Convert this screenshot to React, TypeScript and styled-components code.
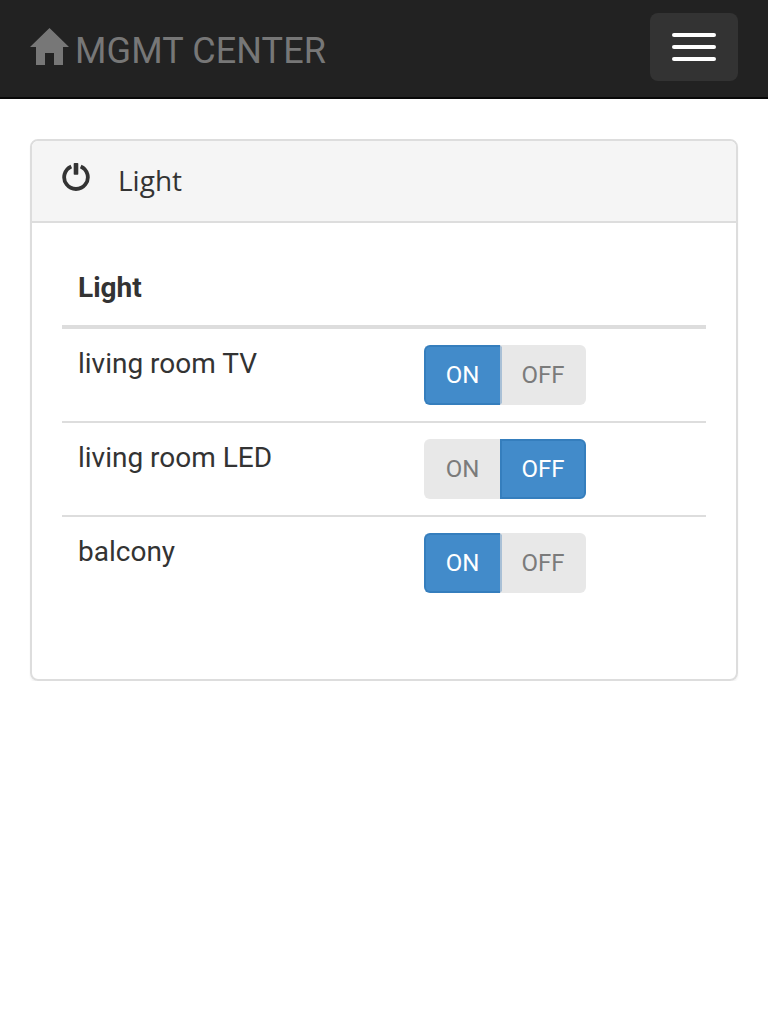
import React from "react";
import styled, { createGlobalStyle, css } from "styled-components";

const GlobalStyle = createGlobalStyle`
  * { box-sizing: border-box; }
  body {
    margin: 0;
    background: #fff;
    color: #333;
    font: 28px/40px Roboto, "Liberation Sans", sans-serif;
  }
`;

const Navbar = styled.nav`
  display: flex;
  justify-content: space-between;
  align-items: flex-start;
  height: 99px;
  padding: 13px 30px 0;
  background: #222;
  border-bottom: 2px solid #080808;
`;

const Brand = styled.div`
  display: flex;
  align-items: flex-start;
  gap: 6px;
  padding-top: 14px;
  color: #777;
  font-size: 36px;
  line-height: 48px;
  letter-spacing: 0.12px;
  white-space: nowrap;
`;

const HomeIcon = styled.svg`
  display: block;
  width: 39px;
  height: 39px;
  fill: currentColor;
`;

const MenuButton = styled.button`
  display: flex;
  flex-direction: column;
  align-items: center;
  justify-content: center;
  gap: 8px;
  width: 88px;
  height: 68px;
  padding: 0;
  border: 0;
  border-radius: 8px;
  background: #333;
`;

const MenuBar = styled.span`
  width: 44px;
  height: 4px;
  border-radius: 2px;
  background: #fff;
`;

const Panel = styled.section`
  height: 542px;
  margin: 40px 30px 0;
  border: 2px solid #ddd;
  border-radius: 8px;
  box-shadow: 0 2px 2px rgba(0, 0, 0, 0.05);
`;

const PanelHeading = styled.header`
  display: flex;
  gap: 28px;
  height: 82px;
  padding: 20px 30px 0;
  border-bottom: 2px solid #ddd;
  border-radius: 6px 6px 0 0;
  background: #f5f5f5;
  font-family: "Open Sans", "Noto Sans", sans-serif;
  line-height: 38px;
`;

const PowerIcon = styled.svg`
  display: block;
  width: 28px;
  height: 28px;
  margin-top: 2px;
  fill: none;
  stroke: currentColor;
`;

const PanelBody = styled.div`
  padding: 30px;
`;

const Table = styled.table`
  width: 100%;
  border-collapse: separate;
  border-spacing: 0;
  table-layout: fixed;
`;

const HeadCell = styled.th`
  height: 76px;
  padding: 15px 16px 17px;
  border-bottom: 4px solid #ddd;
  text-align: left;
  font-weight: 700;
`;

const Cell = styled.td<{ $divided?: boolean }>`
  padding: 16px;
  border-top: ${(p) => (p.$divided ? "2px solid #ddd" : "0")};
  line-height: 38px;
  vertical-align: top;
`;

const NameColumn = styled.col`
  width: 346px;
`;

const Switch = styled.div`
  display: flex;
  height: 60px;
`;

const activeOption = css`
  color: #fff;
  background: #428bca;
  border-color: #357ebd;
`;

const Option = styled.button<{ $side: "left" | "right"; $active: boolean }>`
  width: ${(p) => (p.$side === "left" ? "76px" : "86px")};
  padding: 0;
  border: 2px solid #e8e8e8;
  border-radius: ${(p) => (p.$side === "left" ? "6px 0 0 6px" : "0 6px 6px 0")};
  background: #e8e8e8;
  color: #7b7b7b;
  font: 24px/36px Roboto, "Liberation Sans", sans-serif;
  ${(p) => p.$active && activeOption}
  ${(p) => p.$side === "left" && "border-right-width: 0; padding-right: 1px;"}
  ${(p) => p.$side === "right" && !p.$active && "border-left-color: #a9c0d6;"}
`;

const lights = [
  { name: "living room TV", on: true },
  { name: "living room LED", on: false },
  { name: "balcony", on: true },
];

function LightSwitch({ on }: { on: boolean }) {
  return (
    <Switch>
      <Option $side="left" $active={on}>ON</Option>
      <Option $side="right" $active={!on}>OFF</Option>
    </Switch>
  );
}

export default function App() {
  return (
    <>
      <GlobalStyle />
      <Navbar>
        <Brand>
          <HomeIcon viewBox="0 0 39 39" aria-hidden="true">
            <path d="M19.5 1 L39 20 H33 V38 H24 V26 H15 V38 H6 V20 H0 Z" />
          </HomeIcon>
          <span>MGMT CENTER</span>
        </Brand>
        <MenuButton aria-label="Menu">
          <MenuBar />
          <MenuBar />
          <MenuBar />
        </MenuButton>
      </Navbar>
      <Panel>
        <PanelHeading>
          <PowerIcon viewBox="0 0 28 28" aria-hidden="true">
            <path d="M9.3 3.4 A11.8 11.8 0 1 0 18.7 3.4" strokeWidth="3.8" />
            <rect x="11.7" y="0" width="4.6" height="11.8" rx="0.8" fill="currentColor" stroke="none" />
          </PowerIcon>
          <span>Light</span>
        </PanelHeading>
        <PanelBody>
          <Table>
            <colgroup>
              <NameColumn />
              <col />
            </colgroup>
            <thead>
              <tr>
                <HeadCell colSpan={2}>Light</HeadCell>
              </tr>
            </thead>
            <tbody>
              {lights.map((light, i) => (
                <tr key={light.name}>
                  <Cell $divided={i > 0}>{light.name}</Cell>
                  <Cell $divided={i > 0}>
                    <LightSwitch on={light.on} />
                  </Cell>
                </tr>
              ))}
            </tbody>
          </Table>
        </PanelBody>
      </Panel>
    </>
  );
}
